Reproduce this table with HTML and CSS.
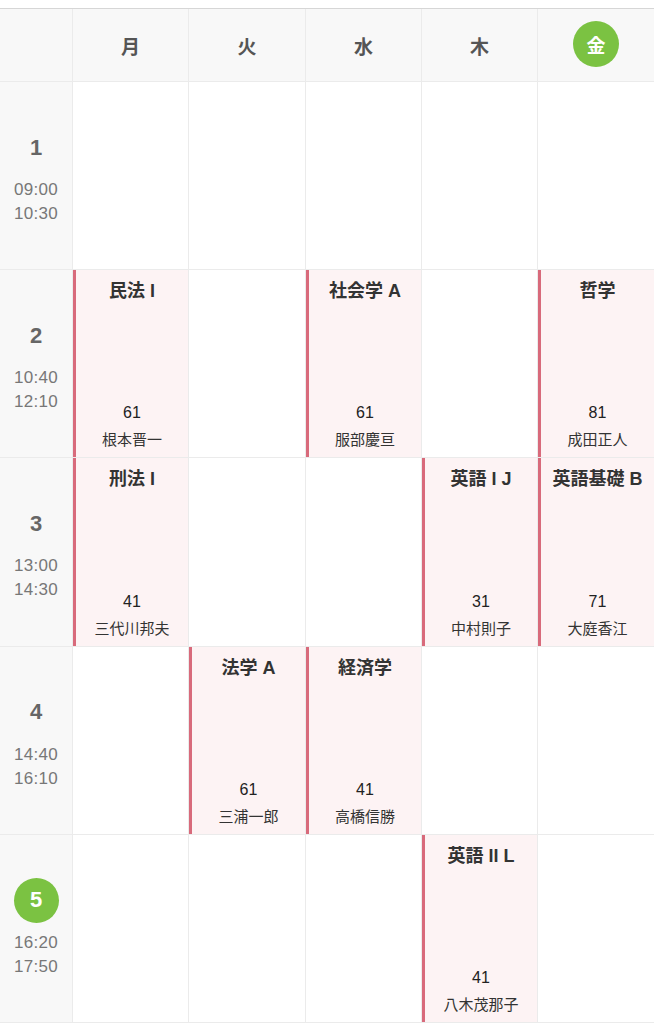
FILE: index.html
```html
<!DOCTYPE html>
<html lang="ja">
<head>
<meta charset="utf-8">
<title>時間割</title>
<link rel="stylesheet" href="styles.css">
</head>
<body>
<div class="timetable">
  <div class="head corner"></div>
  <div class="head"><span class="day">月</span></div>
  <div class="head"><span class="day">火</span></div>
  <div class="head"><span class="day">水</span></div>
  <div class="head"><span class="day">木</span></div>
  <div class="head"><span class="day today">金</span></div>

  <div class="period"><span class="num">1</span><span class="time">09:00</span><span class="time">10:30</span></div>
  <div class="cell"></div>
  <div class="cell"></div>
  <div class="cell"></div>
  <div class="cell"></div>
  <div class="cell"></div>

  <div class="period"><span class="num">2</span><span class="time">10:40</span><span class="time">12:10</span></div>
  <div class="cell lesson"><div class="title">民法 I</div><div class="room">61</div><div class="teacher">根本晋一</div></div>
  <div class="cell"></div>
  <div class="cell lesson"><div class="title">社会学 A</div><div class="room">61</div><div class="teacher">服部慶亘</div></div>
  <div class="cell"></div>
  <div class="cell lesson"><div class="title">哲学</div><div class="room">81</div><div class="teacher">成田正人</div></div>

  <div class="period"><span class="num">3</span><span class="time">13:00</span><span class="time">14:30</span></div>
  <div class="cell lesson"><div class="title">刑法 I</div><div class="room">41</div><div class="teacher">三代川邦夫</div></div>
  <div class="cell"></div>
  <div class="cell"></div>
  <div class="cell lesson"><div class="title">英語 I J</div><div class="room">31</div><div class="teacher">中村則子</div></div>
  <div class="cell lesson"><div class="title">英語基礎 B</div><div class="room">71</div><div class="teacher">大庭香江</div></div>

  <div class="period"><span class="num">4</span><span class="time">14:40</span><span class="time">16:10</span></div>
  <div class="cell"></div>
  <div class="cell lesson"><div class="title">法学 A</div><div class="room">61</div><div class="teacher">三浦一郎</div></div>
  <div class="cell lesson"><div class="title">経済学</div><div class="room">41</div><div class="teacher">高橋信勝</div></div>
  <div class="cell"></div>
  <div class="cell"></div>

  <div class="period"><span class="num now">5</span><span class="time">16:20</span><span class="time">17:50</span></div>
  <div class="cell"></div>
  <div class="cell"></div>
  <div class="cell"></div>
  <div class="cell lesson"><div class="title">英語 II L</div><div class="room">41</div><div class="teacher">八木茂那子</div></div>
  <div class="cell"></div>
</div>
</body>
</html>
```

FILE: styles.css
```css
html, body {
  margin: 0;
  padding: 0;
  background: #ffffff;
}

body {
  font-family: "Liberation Sans", "Noto Sans CJK JP", sans-serif;
  padding-top: 8px;
}

.timetable {
  width: 654px;
  display: grid;
  grid-template-columns: 72px 115px 116px 115px 115px 1fr;
  grid-template-rows: 72px repeat(5, 187.2px);
  gap: 1px;
  background: #ebebeb;
  border-top: 1px solid #d6d6d6;
  border-bottom: 1px solid #ebebeb;
}

.head {
  background: #f8f8f8;
  display: flex;
  align-items: center;
  justify-content: center;
}

.day {
  font-family: "Noto Sans CJK JP", sans-serif;
  font-size: 19px;
  font-weight: bold;
  color: #555555;
  width: 46px;
  height: 46px;
  display: flex;
  align-items: center;
  justify-content: center;
  border-radius: 50%;
}

.day.today {
  background: #7bc242;
  color: #ffffff;
  margin-top: -2px;
}

.period {
  background: #f8f8f8;
  display: flex;
  flex-direction: column;
  align-items: center;
  justify-content: center;
}

.num {
  width: 45px;
  height: 45px;
  margin-bottom: 8px;
  display: flex;
  align-items: center;
  justify-content: center;
  border-radius: 50%;
  font-size: 22px;
  font-weight: bold;
  color: #666666;
}

.num.now {
  background: #7bc242;
  color: #ffffff;
}

.time {
  font-size: 17px;
  line-height: 24px;
  color: #777777;
  letter-spacing: 0.3px;
}

.cell {
  background: #ffffff;
}

.lesson {
  background: #fdf3f4;
  border-left: 3px solid #d86a7b;
  display: flex;
  flex-direction: column;
  align-items: center;
  padding: 9px 0 6px;
  color: #333333;
}

.title {
  font-family: "Liberation Sans", "Noto Sans CJK JP", sans-serif;
  font-size: 18px;
  line-height: 24px;
  font-weight: bold;
  color: #333333;
  flex: 1;
}

.room {
  font-size: 16px;
  line-height: 28px;
  color: #222222;
}

.teacher {
  font-family: "Noto Sans CJK JP", sans-serif;
  font-size: 15px;
  line-height: 24px;
  color: #333333;
}
```
